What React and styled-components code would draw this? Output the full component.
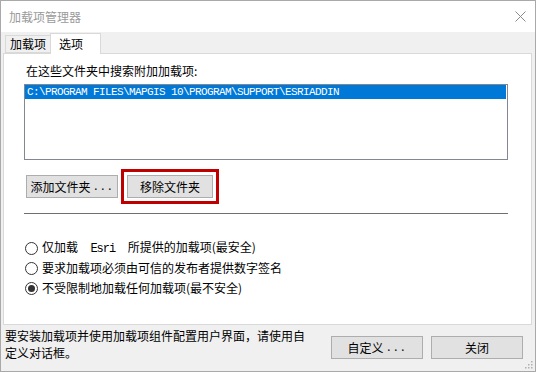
import React from "react";
import styled, { createGlobalStyle } from "styled-components";

const Global = createGlobalStyle`
  html, body { margin: 0; padding: 0; background: #ffffff; }
  body { font-family: "Noto Sans CJK SC", "Noto Sans", sans-serif; font-size: 12px; }
  * { box-sizing: border-box; }
`;

const Window = styled.div`
  position: relative;
  width: 536px;
  height: 372px;
  border: 1px solid #a9a9a9;
  background: #f0f0f0;
  display: flex;
  flex-direction: column;
  overflow: hidden;
`;

const TitleBar = styled.div`
  height: 31px;
  flex: none;
  background: #ffffff;
  display: flex;
  align-items: center;
  justify-content: space-between;
  padding: 0 9px 0 8px;
`;

const Title = styled.span`
  color: #9a9a9a;
  font-size: 12px;
  line-height: 16px;
`;

const CloseBtn = styled.span`
  width: 12px;
  height: 12px;
  display: flex;
  align-items: center;
  justify-content: center;
`;

const Content = styled.div`
  display: flex;
  flex-direction: column;
  padding: 0 3px 0 2px;
`;

const TabStrip = styled.div`
  height: 21px;
  display: flex;
  align-items: flex-end;
  padding-left: 2px;
`;

const Tab = styled.div`
  height: ${(p) => (p.$active ? "21px" : "18px")};
  width: ${(p) => (p.$active ? "51px" : "45px")};
  margin-bottom: ${(p) => (p.$active ? "-1px" : "0")};
  border: 1px solid #d9d9d9;
  border-bottom: ${(p) => (p.$active ? "none" : "1px solid #d9d9d9")};
  border-right: ${(p) => (p.$active ? "1px solid #d9d9d9" : "none")};
  background: ${(p) => (p.$active ? "#ffffff" : "#f0f0f0")};
  position: relative;
  z-index: ${(p) => (p.$active ? 1 : 0)};
  padding-left: ${(p) => (p.$active ? "8px" : "4px")};
  padding-top: ${(p) => (p.$active ? "2px" : "0")};
  font-size: 12px;
  line-height: 16px;
  color: #000;
`;

const Panel = styled.div`
  height: 272px;
  border: 1px solid #d9d9d9;
  background: #ffffff;
  display: flex;
  flex-direction: column;
  padding: 9px 22px 0 20px;
`;

const Label = styled.div`
  font-size: 12px;
  line-height: 16px;
  margin-left: 2px;
  color: #000;
`;

const ListBox = styled.div`
  margin-top: 5px;
  height: 76px;
  width: 484px;
  border: 1px solid #828790;
  background: #fff;
  padding: 0 1px 0 0;
`;

const ListRow = styled.div`
  height: 14px;
  background: ${(p) => (p.$selected ? "#0078d7" : "transparent")};
  color: ${(p) => (p.$selected ? "#ffffff" : "#000")};
  padding-left: 2px;
  font-family: "Liberation Mono", "DejaVu Sans Mono", monospace;
  font-size: 11px;
  letter-spacing: -0.6px;
  line-height: 14px;
  white-space: nowrap;
`;

const ButtonRow = styled.div`
  margin-top: 15px;
  margin-left: 2px;
  display: flex;
  gap: 9px;
`;

const Button = styled.div`
  width: ${(p) => p.$w || 92}px;
  height: 23px;
  background: #e1e1e1;
  border: 1px solid #adadad;
  display: flex;
  align-items: center;
  justify-content: center;
  font-size: 12px;
  line-height: 16px;
  color: #000;
  outline: ${(p) => (p.$marked ? "3px solid #c00000" : "none")};
  outline-offset: ${(p) => (p.$marked ? "3px" : "0")};
`;

const Dots = styled.span`
  font-family: "Liberation Mono", "DejaVu Sans Mono", monospace;
  font-size: 11px;
  letter-spacing: 0.4px;
  margin-left: 2px;
`;

const Separator = styled.div`
  margin-top: 15px;
  height: 1px;
  width: 484px;
  background: #6f6f6f;
`;

const RadioGroup = styled.div`
  margin-top: 24px;
  margin-left: 1px;
  display: flex;
  flex-direction: column;
`;

const RadioRow = styled.div`
  height: 20px;
  display: flex;
  align-items: center;
  gap: 4px;
  font-size: 12px;
  line-height: 16px;
  color: #000;
`;

const RadioCircle = styled.span`
  width: 13px;
  height: 13px;
  border-radius: 50%;
  border: 1px solid #333333;
  background: #fff;
  display: flex;
  align-items: center;
  justify-content: center;
  flex: none;
  &::after {
    content: "";
    width: 7px;
    height: 7px;
    border-radius: 50%;
    background: ${(p) => (p.$checked ? "#333333" : "transparent")};
  }
`;

const Mono = styled.span`
  font-family: "Liberation Mono", "DejaVu Sans Mono", monospace;
  font-size: 12px;
  letter-spacing: -1px;
  white-space: pre;
`;

const Footer = styled.div`
  flex: 1;
  display: flex;
  justify-content: space-between;
  align-items: flex-start;
  padding: 0 12px 0 4px;
`;

const FooterText = styled.div`
  width: 306px;
  margin-top: 2px;
  font-size: 12px;
  line-height: 17px;
  color: #000;
`;

const FooterButtons = styled.div`
  margin-top: 11px;
  display: flex;
  gap: 8px;
`;

const Grip = styled.svg`
  position: absolute;
  right: 2px;
  bottom: 2px;
`;

export default function App() {
  return (
    <>
      <Global />
      <Window>
        <TitleBar>
          <Title>加载项管理器</Title>
          <CloseBtn>
            <svg width="11" height="11" viewBox="0 0 11 11">
              <path d="M0.5 0.5 L10.5 10.5 M10.5 0.5 L0.5 10.5" stroke="#8a8a8a" strokeWidth="1" fill="none" />
            </svg>
          </CloseBtn>
        </TitleBar>
        <Content>
          <TabStrip>
            <Tab>加载项</Tab>
            <Tab $active>选项</Tab>
          </TabStrip>
          <Panel>
            <Label>在这些文件夹中搜索附加加载项:</Label>
            <ListBox>
              <ListRow $selected>C:\PROGRAM FILES\MAPGIS 10\PROGRAM\SUPPORT\ESRIADDIN</ListRow>
            </ListBox>
            <ButtonRow>
              <Button $w={92}>
                添加文件夹<Dots>...</Dots>
              </Button>
              <Button $w={86} $marked>移除文件夹</Button>
            </ButtonRow>
            <Separator />
            <RadioGroup>
              <RadioRow>
                <RadioCircle />
                <span>
                  仅加载<Mono>  Esri  </Mono>所提供的加载项(最安全)
                </span>
              </RadioRow>
              <RadioRow>
                <RadioCircle />
                <span>要求加载项必须由可信的发布者提供数字签名</span>
              </RadioRow>
              <RadioRow>
                <RadioCircle $checked />
                <span>不受限制地加载任何加载项(最不安全)</span>
              </RadioRow>
            </RadioGroup>
          </Panel>
        </Content>
        <Footer>
          <FooterText>要安装加载项并使用加载项组件配置用户界面，请使用自定义对话框。</FooterText>
          <FooterButtons>
            <Button $w={92}>
              自定义<Dots>...</Dots>
            </Button>
            <Button $w={92}>关闭</Button>
          </FooterButtons>
        </Footer>
        <Grip width="9" height="9" viewBox="0 0 9 9">
          {[
            [7, 1],
            [7, 4],
            [4, 4],
            [7, 7],
            [4, 7],
            [1, 7],
          ].map(([x, y], i) => (
            <rect key={i} x={x} y={y} width="1.5" height="1.5" fill="#b0b0b0" />
          ))}
        </Grip>
      </Window>
    </>
  );
}
